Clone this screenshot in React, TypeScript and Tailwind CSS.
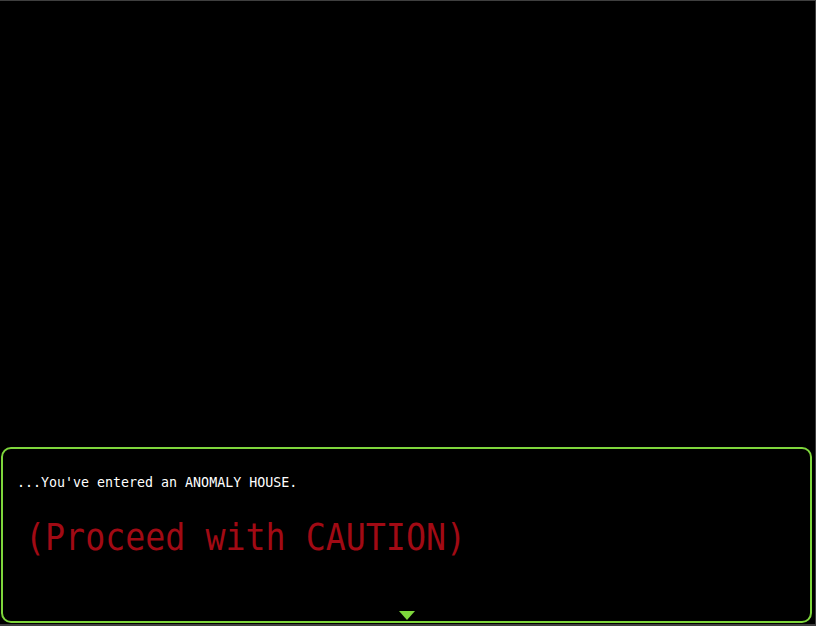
import React from "react";

export default function App() {
  return (
    <div className="w-[816px] h-[626px] bg-[#3f3f3f] pt-px pr-px pb-[2px] overflow-hidden">
      <div className="w-[815px] h-[623px] bg-black flex flex-col justify-end pl-px pr-[3px] pb-px">
        <div
          className="relative h-[176px] rounded-[10px] border-2 border-[#7ed63c] bg-black px-[14px] pt-[24px]"
          style={{ fontFamily: '"DejaVu Sans Mono", "Liberation Mono", monospace' }}
        >
          <div className="text-[13.3px] leading-[20px] text-white">...You've entered an ANOMALY HOUSE.</div>
          <div className="mt-[20px] ml-[8px] text-[33.3px] leading-[44px] text-[#a10a14] origin-top-left scale-y-[1.12]">(Proceed with CAUTION)</div>
          <svg className="absolute left-[396px] bottom-[1px]" width="16" height="9" viewBox="0 0 16 9">
            <polygon points="0,0 16,0 8,9" fill="#7ed63c" />
          </svg>
        </div>
      </div>
    </div>
  );
}
